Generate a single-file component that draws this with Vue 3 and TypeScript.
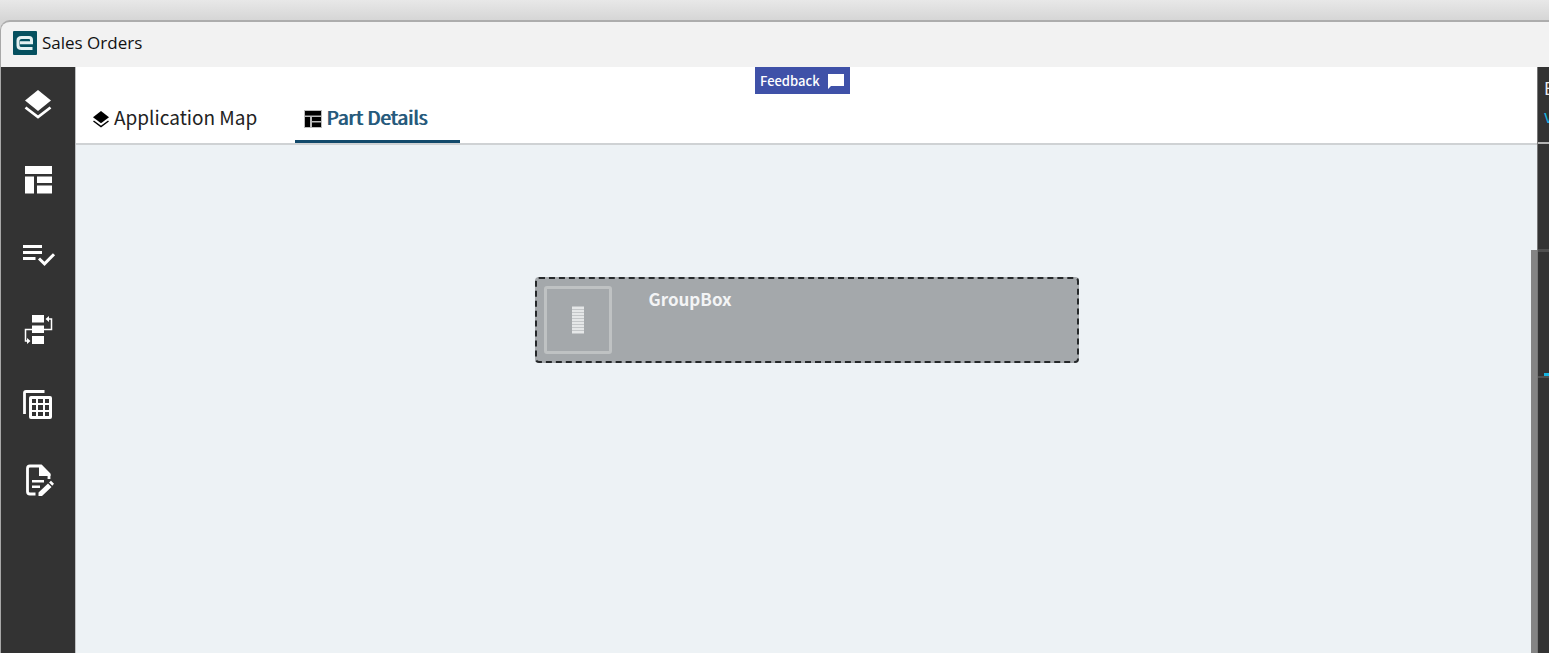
<script setup lang="ts">
import { ref } from 'vue'

interface Tab {
  id: string
  label: string
}

const tabs: Tab[] = [
  { id: 'map', label: 'Application Map' },
  { id: 'details', label: 'Part Details' },
]
const active = ref<string>('details')

const tools: string[] = ['Layers', 'Layout', 'Rules', 'Events', 'Data views', 'Edit page']
</script>

<template>
  <div class="desktop">
    <div class="window">
      <header class="titlebar">
        <svg class="logo" viewBox="0 0 24 24" aria-hidden="true">
          <rect width="24" height="24" rx="1" fill="#05505f" />
          <path d="M7 11.8H18.5V9Q18.5 6.500 16 6.500H8.500Q5 6.500 5 9.500V14.500Q5 17.500 8.500 17.500H19.500" fill="none" stroke="#e4f1f2" stroke-width="3" />
        </svg>
        <h1 class="title">Sales Orders</h1>
      </header>

      <div class="body">
        <nav class="sidebar" aria-label="Tools">
          <button v-for="(tool, i) in tools" :key="tool" class="tool" type="button" :aria-label="tool">
            <svg viewBox="0 0 36 36" fill="#fff" aria-hidden="true">
              <template v-if="i === 0">
                <path d="M18 4L31 14.5L18 25L5 14.5Z" />
                <path d="M5.5 21.5L18 31L30.5 21.5" fill="none" stroke="#fff" stroke-width="2.8" />
              </template>
              <template v-else-if="i === 1">
                <path d="M5 5H32V13H5ZM5 15.5H14V32.5H5ZM17 15.5H32V22H17ZM17 24.5H32V32.5H17Z" />
              </template>
              <template v-else-if="i === 2">
                <path d="M3 9H22V12H3ZM3 15H22V18H3ZM3 21H15.5V24H3Z" />
                <path d="M19 22.5L24.5 27.8L34 18.2" fill="none" stroke="#fff" stroke-width="3" />
              </template>
              <template v-else-if="i === 3">
                <path d="M12 4H24V11.5H12ZM12 14.5H24V22H12ZM12 25H24V33H12ZM29 5L25.5 8L29 11ZM7 27L10.5 30L7 33Z" />
                <path d="M24 18.5H31.5V8H28M12 18.5H5.5V30H8" fill="none" stroke="#fff" stroke-width="1.5" />
              </template>
              <template v-else-if="i === 4">
                <path d="M4.5 28V7Q4.500 5.500 6 5.500H24.5" fill="none" stroke="#fff" stroke-width="2.8" />
                <path fill-rule="evenodd" d="M11 10H30Q32 10 32 12V31Q32 33 30 33H11Q9 33 9 31V12Q9 10 11 10ZM12 13V17H16V13ZM18 13V17H23V13ZM25 13V17H29V13ZM12 19V24H16V19ZM18 19V24H23V19ZM25 19V24H29V19ZM12 26V30H16V26ZM18 26V30H23V26ZM25 26V30H29V26Z" />
              </template>
              <template v-else>
                <path d="M15.5 33H10Q7.5 33 7.5 30.5V7.5Q7.5 5 10 5H21L29 13V18" fill="none" stroke="#fff" stroke-width="2.8" />
                <path d="M19 4.5H22L30.5 13V15H19ZM12 19H24V21.5H12ZM12 24.5H20V27H12Z" />
                <path d="M18.5 34.5V31.5L28 22.5L31.5 26L22 35H18.5ZM29 21.5L31 19.8L34 22.8L32.3 24.8Z" />
              </template>
            </svg>
          </button>
        </nav>

        <main class="main">
          <div class="top">
            <button class="feedback" type="button">
              Feedback
              <svg viewBox="0 0 18 16" aria-hidden="true"><path d="M1 1H17V13H4L1 16Z" fill="#fff" /></svg>
            </button>
            <div class="tabs" role="tablist">
              <button
                v-for="tab in tabs"
                :key="tab.id"
                class="tab"
                :class="{ active: active === tab.id }"
                type="button"
                role="tab"
                :aria-selected="active === tab.id"
                @click="active = tab.id"
              >
                <svg v-if="tab.id === 'map'" viewBox="0 0 18 18" aria-hidden="true">
                  <path d="M9 1L17 7.2L9 13.2L1 7.2Z" />
                  <path d="M1.5 11L9 16.5L16.5 11" fill="none" stroke="#000" stroke-width="1.5" />
                </svg>
                <svg v-else viewBox="0 0 18 18" aria-hidden="true">
                  <rect width="18" height="18" fill="#bbb" />
                  <path d="M1 1H17V5.5H1ZM1 7H6V17H1ZM8 7H17V11H8ZM8 12.5H17V17H8Z" />
                </svg>
                <span>{{ tab.label }}</span>
              </button>
            </div>
          </div>

          <div class="workspace">
            <section class="canvas" aria-label="Page canvas">
              <div class="groupbox">
                <div class="thumb">
                  <svg viewBox="0 0 12 28" aria-hidden="true">
                    <rect width="12" height="28" fill="#c4c7c9" />
                    <rect v-for="n in 9" :key="n" x="0" :y="(n - 1) * 3 + 1" width="12" height="2" fill="#e5e7e8" />
                  </svg>
                </div>
                <span class="name">GroupBox</span>
              </div>
            </section>
            <div class="scrollbar"></div>
          </div>
        </main>

        <aside class="panel">
          <div class="panel-head">
            <span class="letter">E</span>
            <a class="link" href="#">v</a>
          </div>
          <div class="panel-gap"></div>
          <div class="panel-list"><span class="marker"></span></div>
        </aside>
      </div>
    </div>
  </div>
</template>

<style>
body {
  margin: 0;
}
</style>

<style scoped>
* {
  box-sizing: border-box;
}
.desktop {
  min-height: 100vh;
  padding-top: 20px;
  display: flex;
  flex-direction: column;
  overflow: hidden;
  background: linear-gradient(#e8e8e8, #d6d6d6 20px);
  font-family: "Noto Sans CJK SC", "Noto Sans", sans-serif;
}
button {
  border: 0;
  padding: 0;
  background: none;
  font: inherit;
  cursor: pointer;
}
svg {
  display: block;
  flex: none;
}
.window {
  flex: 1;
  display: flex;
  flex-direction: column;
  border-top: 2px solid #adadad;
  border-left: 1px solid #a8a8a8;
  border-top-left-radius: 10px;
  background: #f2f2f2;
}
.titlebar {
  height: 45px;
  padding: 0 12px 3px;
  display: flex;
  align-items: center;
  gap: 5px;
}
.logo {
  width: 24px;
  height: 24px;
}
.title {
  margin: 0;
  font: 400 17px/24px "Open Sans", "Noto Sans", sans-serif;
  color: #111;
}
.body {
  flex: 1;
  display: flex;
}
.sidebar {
  flex: none;
  width: 75px;
  border-right: 1px solid #bfc1c3;
  background: #333;
}
.tool {
  width: 100%;
  height: 75px;
  padding-bottom: 2px;
  display: flex;
  align-items: center;
  justify-content: center;
}
.tool svg {
  width: 36px;
  height: 36px;
}
.main {
  flex: 1;
  min-width: 0;
  display: flex;
  flex-direction: column;
}
.top {
  height: 78px;
  display: flex;
  flex-direction: column;
  background: #fff;
  border-bottom: 2px solid #cfd2d4;
}
.feedback {
  align-self: center;
  width: 95px;
  height: 27px;
  padding: 0 5px;
  display: flex;
  align-items: center;
  justify-content: space-between;
  margin-right: 8px;
  background: #3f51a8;
  color: #fff;
  font-size: 13px;
  font-weight: 500;
  line-height: 27px;
}
.feedback svg {
  width: 18px;
  height: 16px;
}
.tabs {
  flex: 1;
  display: flex;
  gap: 22px;
}
.tab {
  padding: 0 16px;
  display: flex;
  align-items: center;
  gap: 4px;
  border-bottom: 3px solid transparent;
  color: #222;
  font-size: 19px;
  line-height: 28px;
}
.tab svg {
  width: 18px;
  height: 18px;
  margin-top: 4px;
}
.tab.active {
  padding: 0 33px 0 9px;
  border-bottom-color: #124a6b;
  color: #265a7c;
  text-shadow: 1px 0 #265a7c;
}
.workspace {
  flex: 1;
  display: flex;
  background: #edf2f5;
}
.canvas {
  flex: 1;
  padding: 132px 0 0 6px;
}
.groupbox {
  width: 544px;
  height: 86px;
  margin: 0 auto;
  padding: 7px;
  display: flex;
  gap: 37px;
  border: 2px dashed #25282a;
  border-radius: 4px;
  background: #a4a8ab;
}
.thumb {
  width: 68px;
  height: 68px;
  display: flex;
  align-items: center;
  justify-content: center;
  border: 3px solid #bfc2c3;
  border-radius: 3px;
}
.thumb svg {
  width: 12px;
  height: 28px;
}
.name {
  color: #f3f4f5;
  font-size: 17px;
  font-weight: 700;
  line-height: 26px;
}
.scrollbar {
  width: 6px;
  margin-top: 105px;
  background: #848484;
}
.panel {
  flex: none;
  width: 12px;
  display: flex;
  flex-direction: column;
  overflow: hidden;
  background: #333;
  border-left: 1px solid #777;
}
.panel-head {
  height: 77px;
  padding: 7px 0 0 6px;
  border-bottom: 2px solid #b5b5b5;
  font-size: 17px;
  line-height: 28px;
}
.letter {
  display: block;
  color: #eee;
}
.link {
  display: block;
  color: #18b4e0;
  text-decoration: none;
}
.panel-gap {
  height: 105px;
}
.panel-list {
  height: 129px;
  display: flex;
  align-items: flex-end;
  justify-content: flex-end;
  border-top: 3px solid #505050;
  border-bottom: 2px solid #505050;
}
.marker {
  width: 5px;
  height: 3px;
  background: #18b4e0;
}
</style>
